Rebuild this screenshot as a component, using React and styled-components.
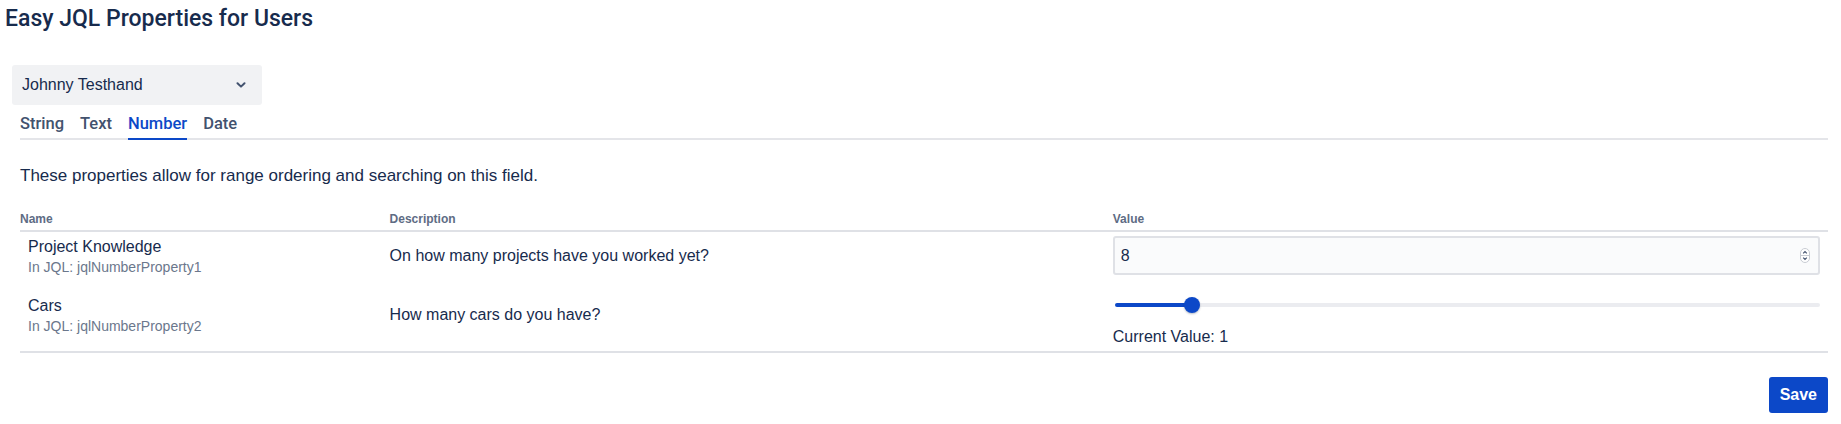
import React, { useState } from 'react';
import styled, { createGlobalStyle } from 'styled-components';

const GlobalStyle = createGlobalStyle`
    body {
        margin: 0;
        background: #ffffff;
        font-family: "Liberation Sans", Arial, sans-serif;
        color: #172b4d;
    }
`

const Page = styled.div`
    display: flex;
    flex-direction: column;
    padding: 5px 13px 0 0;
`

const Title = styled.h1`
    margin: 0 0 0 5px;
    font-family: Roboto, "Liberation Sans", sans-serif;
    font-size: 23px;
    font-weight: 500;
    line-height: 28px;
    color: #172b4d;
`

const UserSelect = styled.div`
    display: flex;
    align-items: center;
    justify-content: space-between;
    box-sizing: border-box;
    width: 250px;
    height: 40px;
    margin: 32px 0 0 12px;
    padding: 0 16px 0 10px;
    background: #f1f2f4;
    border-radius: 3px;
    font-size: 16px;
    color: #172b4d;
`

const Content = styled.div`
    display: flex;
    flex-direction: column;
    padding-left: 20px;
`

const TabList = styled.div`
    display: flex;
    gap: 16px;
    margin-top: 9px;
    border-bottom: 2px solid #e4e5e9;
`

const Tab = styled.div`
    padding-bottom: 4px;
    margin-bottom: -2px;
    border-bottom: 2px solid ${(p) => (p.$active ? '#0c48c8' : 'transparent')};
    font-family: Roboto, "Liberation Sans", sans-serif;
    font-size: 16.5px;
    font-weight: 500;
    line-height: 20px;
    color: ${(p) => (p.$active ? '#0c48c8' : '#42526e')};
    cursor: pointer;
`

const Intro = styled.p`
    margin: 26px 0 0;
    font-size: 17px;
    line-height: 20px;
`

const Table = styled.table`
    width: 100%;
    margin-top: 21px;
    border-collapse: collapse;
    table-layout: fixed;
    border-bottom: 2px solid #dfe1e6;
`

const Th = styled.th`
    width: ${(p) => p.$width};
    padding: 4px 8px 3px;
    border-bottom: 2px solid #dfe1e6;
    text-align: left;
    font-size: 12px;
    font-weight: 700;
    line-height: 16px;
    color: #5e6c84;

    &:first-child {
        padding-left: 0;
    }
`

const Td = styled.td`
    padding: 4px 8px;
    vertical-align: middle;
    font-size: 16px;
    line-height: 20px;
`

const PropName = styled.div`
    font-size: 16px;
    line-height: 20px;
`

const JqlName = styled.div`
    margin-top: 2px;
    font-size: 14px;
    line-height: 16px;
    color: #6b778c;
`

const NumberField = styled.div`
    display: flex;
    align-items: center;
    box-sizing: border-box;
    height: 39px;
    padding: 0 8px 0 6px;
    background: #fafbfc;
    border: 2px solid #dfe1e6;
    border-radius: 3px;

    input {
        flex: 1;
        border: none;
        outline: none;
        background: transparent;
        padding: 0;
        font-family: inherit;
        font-size: 16px;
        color: #172b4d;
    }
`

const SliderBlock = styled.div`
    display: flex;
    align-items: center;
    height: 44px;
    padding: 0 0 0 2px;
`

const Range = styled.input`
    -webkit-appearance: none;
    appearance: none;
    width: 100%;
    height: 16px;
    margin: 0;
    background: transparent;

    &::-webkit-slider-runnable-track {
        height: 4px;
        border-radius: 2px;
        background: linear-gradient(to right, #0c48c8 0 ${(p) => p.$fill}%, #ebecf0 ${(p) => p.$fill}% 100%);
    }

    &::-webkit-slider-thumb {
        -webkit-appearance: none;
        width: 16px;
        height: 16px;
        margin-top: -6px;
        border-radius: 50%;
        background: #0c48c8;
        box-shadow: 0 1px 2px rgba(9, 30, 66, 0.3);
        border: none;
    }
`

const CurrentValue = styled.div`
    font-size: 16px;
    line-height: 20px;
`

const Footer = styled.div`
    display: flex;
    justify-content: flex-end;
    margin-top: 24px;
`

const SaveButton = styled.button`
    height: 36px;
    padding: 0 11px;
    border: none;
    border-radius: 3px;
    background: #0c48c8;
    color: #ffffff;
    font-family: "Liberation Sans", Arial, sans-serif;
    font-size: 16px;
    font-weight: 700;
    cursor: pointer;
`

const Chevron = () => (
    <svg width="10" height="6" viewBox="0 0 10 6">
        <path d="M1.5 1.2 L5 4.6 L8.5 1.2" stroke="#42526e" strokeWidth="2" fill="none" strokeLinecap="round" strokeLinejoin="round" />
    </svg>
)

const Spinner = () => (
    <svg width="10" height="15" viewBox="0 0 10 15">
        <rect x="0.5" y="0.5" width="9" height="14" rx="4.5" fill="#ffffff" stroke="#c8ccd3" />
        <line x1="0.5" y1="7.5" x2="9.5" y2="7.5" stroke="#c8ccd3" />
        <path d="M3.2 5.4 L5 3.6 L6.8 5.4" stroke="#42526e" strokeWidth="1.2" fill="none" />
        <path d="M3.2 9.6 L5 11.4 L6.8 9.6" stroke="#42526e" strokeWidth="1.2" fill="none" />
    </svg>
)

const TABS = ['String', 'Text', 'Number', 'Date'];

const App = () => {
    const [tab, setTab] = useState('Number');
    const [knowledge, setKnowledge] = useState('8');
    const [cars, setCars] = useState(1);
    const min = 0;
    const max = 10;
    // fill reaches the thumb centre: thumb is 16px on a ~707px track
    const fill = (((cars - min) / (max - min)) * 691 + 8) / 707 * 100;

    return (
        <Page>
            <GlobalStyle />
            <Title>Easy JQL Properties for Users</Title>
            <UserSelect>
                <span>Johnny Testhand</span>
                <Chevron />
            </UserSelect>
            <Content>
                <TabList>
                    {TABS.map((t) => (
                        <Tab key={t} $active={t === tab} onClick={() => setTab(t)}>{t}</Tab>
                    ))}
                </TabList>
                <Intro>These properties allow for range ordering and searching on this field.</Intro>
                <Table>
                    <thead>
                        <tr>
                            <Th $width="20%">Name</Th>
                            <Th $width="40%">Description</Th>
                            <Th $width="40%">Value</Th>
                        </tr>
                    </thead>
                    <tbody>
                        <tr>
                            <Td>
                                <PropName>Project Knowledge</PropName>
                                <JqlName>In JQL: jqlNumberProperty1</JqlName>
                            </Td>
                            <Td>On how many projects have you worked yet?</Td>
                            <Td>
                                <NumberField>
                                    <input value={knowledge} onChange={(e) => setKnowledge(e.target.value)} />
                                    <Spinner />
                                </NumberField>
                            </Td>
                        </tr>
                        <tr>
                            <Td>
                                <PropName>Cars</PropName>
                                <JqlName>In JQL: jqlNumberProperty2</JqlName>
                            </Td>
                            <Td>How many cars do you have?</Td>
                            <Td>
                                <SliderBlock>
                                    <Range
                                        type="range"
                                        min={min}
                                        max={max}
                                        value={cars}
                                        $fill={fill}
                                        onChange={(e) => setCars(Number(e.target.value))}
                                    />
                                </SliderBlock>
                                <CurrentValue>Current Value: {cars}</CurrentValue>
                            </Td>
                        </tr>
                    </tbody>
                </Table>
                <Footer>
                    <SaveButton>Save</SaveButton>
                </Footer>
            </Content>
        </Page>
    )
};

export default App;
